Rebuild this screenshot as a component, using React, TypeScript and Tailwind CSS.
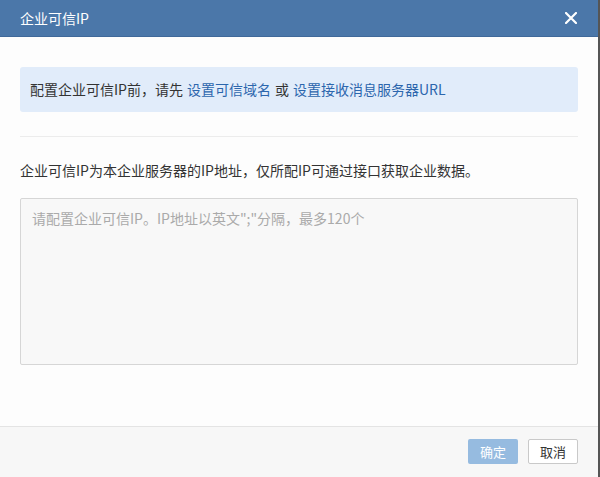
import { FC } from "react";

const font = { fontFamily: '"Noto Sans CJK SC", "Liberation Sans", sans-serif' };

const App: FC = () => {
  return (
    <div className="w-[600px] h-[477px] bg-[#555] flex" style={font}>
      <div className="w-[598px] h-full bg-[#fdfdfd] flex flex-col">
        <div className="h-[37px] shrink-0 bg-[#4b77a9] border-b border-[#40699a] flex items-center justify-between pl-5 pr-[21px]">
          <span className="text-white text-[14px] leading-none">企业可信IP</span>
          <svg width="12" height="12" viewBox="0 0 12 12">
            <path d="M1 1L11 11M11 1L1 11" stroke="#fff" strokeWidth="2.2" strokeLinecap="round" />
          </svg>
        </div>

        <div className="flex-1 px-5">
          <div className="mt-[30px] h-[45px] rounded-[3px] bg-[#e1ecfa] flex items-center pl-[10px] text-[14px] text-[#333]">
            配置企业可信IP前，请先
            <a className="ml-1 text-[#2c66ad]">设置可信域名</a>
            <span className="mx-1">或</span>
            <a className="text-[#2c66ad]">设置接收消息服务器URL</a>
          </div>
          <div className="mt-[24px] h-px bg-[#ececec]" />
          <p className="mt-[23px] text-[14px] leading-[20px] text-[#333]">
            企业可信IP为本企业服务器的IP地址，仅所配IP可通过接口获取企业数据。
          </p>
          <textarea
            className="mt-[18px] block w-full h-[167px] resize-none rounded-[2px] border border-[#d6d6d6] bg-[#f8f8f8] px-[11px] py-[9px] text-[14px] leading-[20px] text-[#333] placeholder:text-[#aaa] outline-none"
            style={font}
            placeholder={"请配置企业可信IP。IP地址以英文\";\"分隔，最多120个"}
          />
        </div>

        <div className="h-[51px] shrink-0 border-t border-[#e4e4e4] bg-[#f7f7f7] flex items-start justify-end gap-[10px] pt-[12px] pr-5">
          <button className="w-[50px] h-[25px] rounded-[2px] bg-[#96bbe0] text-white text-[13px] leading-none">
            确定
          </button>
          <button className="w-[50px] h-[25px] rounded-[2px] bg-white border border-[#c9c9c9] text-[#333] text-[13px] leading-none">
            取消
          </button>
        </div>
      </div>
    </div>
  );
};

export default App;
